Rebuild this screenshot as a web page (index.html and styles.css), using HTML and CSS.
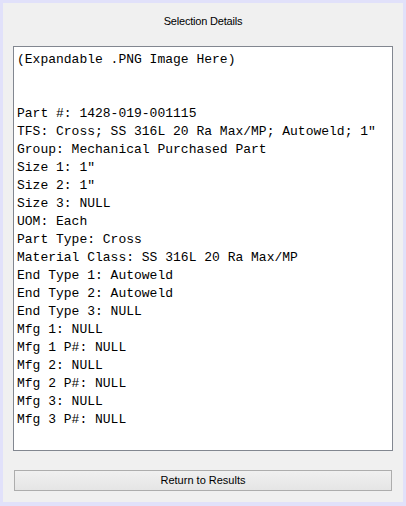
FILE: index.html
```html
<!DOCTYPE html>
<html lang="en">
<head>
<meta charset="utf-8">
<title>Selection Details</title>
<link rel="stylesheet" href="styles.css">
</head>
<body>
<div class="panel">
  <div class="title">Selection Details</div>
  <pre class="details">(Expandable .PNG Image Here)


Part #: 1428-019-001115
TFS: Cross; SS 316L 20 Ra Max/MP; Autoweld; 1"
Group: Mechanical Purchased Part
Size 1: 1"
Size 2: 1"
Size 3: NULL
UOM: Each
Part Type: Cross
Material Class: SS 316L 20 Ra Max/MP
End Type 1: Autoweld
End Type 2: Autoweld
End Type 3: NULL
Mfg 1: NULL
Mfg 1 P#: NULL
Mfg 2: NULL
Mfg 2 P#: NULL
Mfg 3: NULL
Mfg 3 P#: NULL</pre>
  <button class="return-btn" type="button">Return to Results</button>
</div>
</body>
</html>
```

FILE: styles.css
```css
html, body {
  margin: 0;
  padding: 0;
}
body {
  background: #e1e1fa;
  width: 406px;
  height: 506px;
  overflow: hidden;
}
.panel {
  box-sizing: border-box;
  margin: 3px 3px 4px 3px;
  width: 400px;
  height: 499px;
  background: #f0f0f0;
  padding: 0 10px;
  display: flex;
  flex-direction: column;
  font-family: "Liberation Sans", Arial, sans-serif;
  font-size: 11px;
  color: #000;
}
.title {
  box-sizing: border-box;
  height: 43px;
  padding-top: 10px;
  line-height: 16px;
  text-align: center;
  letter-spacing: -0.2px;
}
.details {
  box-sizing: border-box;
  margin: 0;
  height: 405px;
  border: 1px solid #828790;
  background: #fff;
  padding: 4px 3px;
  font-family: "Liberation Mono", "Courier New", monospace;
  font-size: 13px;
  line-height: 18px;
  color: #000;
  overflow: hidden;
  white-space: pre;
}
.return-btn {
  box-sizing: border-box;
  margin: 19px 1px 0 1px;
  height: 21px;
  padding: 0;
  border: 1px solid #adadad;
  border-radius: 0;
  background: linear-gradient(#f0f0f0, #e5e5e5);
  font-family: "Liberation Sans", Arial, sans-serif;
  font-size: 11px;
  color: #000;
  text-align: center;
  line-height: 19px;
}
```
